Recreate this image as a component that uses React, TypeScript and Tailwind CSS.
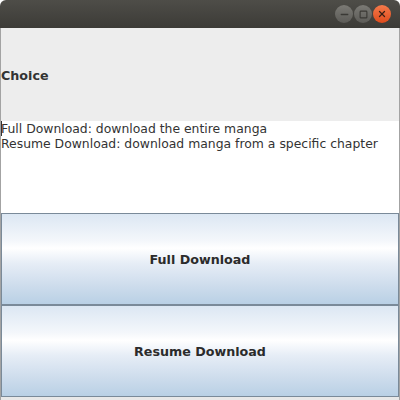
import { Minus, Square, X } from 'lucide-react';

const font = { fontFamily: '"DejaVu Sans", "Liberation Sans", sans-serif' };

const NimbusButton = ({ label }: { label: string }) => (
  <button className="h-[92px] w-full flex items-center justify-center pt-[1px] border border-[#7a8a99] bg-[linear-gradient(to_bottom,#dce7f3_0%,#f4f7fb_30%,#ffffff_38%,#e6edf6_55%,#cddcec_80%,#b9d0e5_100%)] text-[12.7px] font-bold text-[#2b2b2b]">
    {label}
  </button>
);

const App = () => {
  return (
    <div className="w-[400px] h-[400px] bg-white" style={font}>
      <div className="h-[400px] flex flex-col">
        {/* title bar */}
        <div className="h-[28px] rounded-t-[6px] bg-[linear-gradient(to_bottom,#4e4d48,#3c3b37)] flex items-center justify-end gap-[1px] pr-[9px]">
          <div className="w-[18px] h-[18px] rounded-full bg-[linear-gradient(to_bottom,#7b7a75,#5c5b57)] flex items-center justify-center">
            <Minus className="w-[11px] h-[11px] text-[#3a3935]" strokeWidth={3} />
          </div>
          <div className="w-[18px] h-[18px] rounded-full bg-[linear-gradient(to_bottom,#7b7a75,#5c5b57)] flex items-center justify-center">
            <Square className="w-[9px] h-[9px] text-[#3a3935]" strokeWidth={3} />
          </div>
          <div className="w-[18px] h-[18px] rounded-full bg-[linear-gradient(to_bottom,#f47a4b,#df4b1c)] flex items-center justify-center">
            <X className="w-[10px] h-[10px] text-[#3a2015]" strokeWidth={3} />
          </div>
        </div>

        <div className="flex-1 flex flex-col border-x border-[#a3a3a3]">
          <div className="h-[93px] bg-[#ededed] flex items-center pt-[2px]">
            <span className="text-[12.7px] font-bold text-[#333]">Choice</span>
          </div>

          <div className="h-[92px] bg-white text-[12.4px] leading-[15px] text-[#333]">
            <div className="relative">
              <span className="absolute left-0 top-0 h-[15px] w-[1px] bg-[#333]" />
              Full Download: download the entire manga
            </div>
            <div>Resume Download: download manga from a specific chapter</div>
          </div>

          <NimbusButton label="Full Download" />
          <NimbusButton label="Resume Download" />
          <div className="flex-1 bg-[#e8e8e8]" />
        </div>
      </div>
    </div>
  );
};

export default App;
